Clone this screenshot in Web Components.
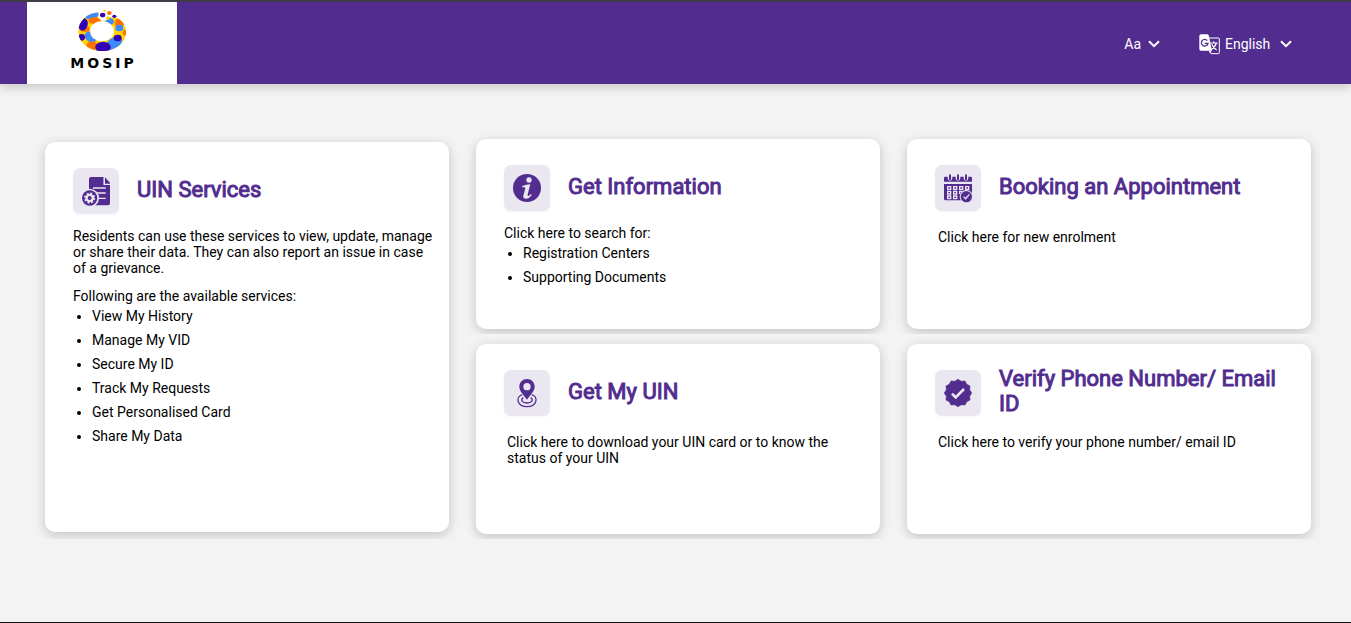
<!DOCTYPE html>
<html lang="en">
<head>
<meta charset="utf-8">
<meta name="viewport" content="width=device-width, initial-scale=1">
<title>MOSIP Resident Portal</title>
<style>
  body {
    margin: 0;
    background: #f3f3f3;
    color: #000;
    font: 14px/16px Roboto, "Liberation Sans", sans-serif;
    --brand: #522d8f;
    --brand-soft: #ebe7f1;
  }
</style>
</head>
<body>
<resident-portal></resident-portal>

<script>
const define = (name, html) => {
  const template = document.createElement('template');
  template.innerHTML = html;
  customElements.define(name, class extends HTMLElement {
    constructor() {
      super();
      this.attachShadow({ mode: 'open' }).append(template.content.cloneNode(true));
    }
  });
};

/* ---------- logo ---------- */
define('mosip-logo', `
<style>
  :host { display: flex; flex-direction: column; align-items: center; width: 150px; height: 82px; padding-top: 6px; box-sizing: border-box; background: #fff; }
  svg { display: block; width: 50px; height: 44px; }
  span { color: #000; font: 700 14px/22px "DejaVu Sans", sans-serif; letter-spacing: 3px; padding-left: 3px; }
</style>
<svg viewBox="171 24 150 132" aria-hidden="true">
  <defs><clipPath id="ring"><path clip-rule="evenodd" d="M235 37C200 40 175 64 175 95C175 128 208 153 247 153C287 153 318 128 318 95C318 76 307 60 289 53L268 52L258 62H246L235 55ZM246 63C266 63 282 76 282 94C282 111 266 124 246 124C226 124 210 111 210 94C210 76 226 63 246 63Z"/></clipPath></defs>
  <g clip-path="url(#ring)">
    <rect x="170" y="25" width="150" height="130" fill="#ffd200"/>
    <ellipse cx="218" cy="44" rx="24" ry="11" transform="rotate(-18 218 44)" fill="#3d8bfd"/>
    <ellipse cx="224" cy="62" rx="19" ry="10" fill="#ff7200"/>
    <ellipse cx="195" cy="87" rx="14" ry="9" fill="#ff7200"/>
    <ellipse cx="189" cy="73" rx="14" ry="19" transform="rotate(15 189 73)" fill="#3300b5"/>
    <ellipse cx="212" cy="111" rx="19" ry="15" transform="rotate(35 212 111)" fill="#3d8bfd"/>
    <ellipse cx="185" cy="112" rx="10" ry="10" fill="#3300b5"/>
    <ellipse cx="216" cy="138" rx="17" ry="14" fill="#ff7200"/>
    <ellipse cx="282" cy="130" rx="27" ry="17" transform="rotate(-35 282 130)" fill="#3d8bfd"/>
    <ellipse cx="249" cy="142" rx="23" ry="17" fill="#3300b5"/>
    <ellipse cx="293" cy="114" rx="12" ry="10" fill="#3300b5"/>
    <ellipse cx="268" cy="63" rx="14" ry="10" transform="rotate(25 268 63)" fill="#3d8bfd"/>
    <ellipse cx="298" cy="69" rx="14" ry="14" fill="#ff7200"/>
    <ellipse cx="298" cy="84" rx="12" ry="10" fill="#3d8bfd"/>
    <ellipse cx="316" cy="98" rx="7" ry="9" fill="#ff7200"/>
  </g>
  <ellipse cx="248" cy="45" rx="8" ry="7" fill="#3300b5"/>
  <ellipse cx="268" cy="39" rx="7" ry="6" fill="#ff7200"/>
  <ellipse cx="283" cy="49" rx="6" ry="5" fill="#3300b5"/>
  <ellipse cx="254" cy="32" rx="4" ry="3" fill="#ffd200"/>
  <ellipse cx="264" cy="54" rx="6" ry="5" fill="#ffd200"/>
</svg>
<span>MOSIP</span>`);

/* ---------- header ---------- */
define('chevron-icon', `
<style>:host { display: block; width: 12px; height: 8px; pointer-events: none; } svg { display: block; }</style>
<svg width="12" height="8" viewBox="0 0 12 8" aria-hidden="true"><path d="M1 1.2L6 6.2L11 1.2" fill="none" stroke="#fff" stroke-width="2"/></svg>`);

define('font-size-menu', `
<style>
  :host { display: block; }
  button { display: flex; align-items: center; gap: 7px; margin: 0; padding: 0; border: 0; background: none; color: #fff; font: inherit; cursor: pointer; }
</style>
<button type="button" aria-haspopup="menu" aria-label="Aa, font size">Aa<chevron-icon></chevron-icon></button>`);

define('language-picker', `
<style>
  :host { display: flex; align-items: center; gap: 5px; }
  svg { display: block; }
  .field { display: grid; align-items: center; width: 67px; }
  select, chevron-icon { grid-area: 1 / 1; }
  chevron-icon { justify-self: end; }
  select { appearance: none; width: 100%; margin: 0; padding: 0 16px 0 0; border: 0; background: none; color: #fff; font: inherit; cursor: pointer; }
  option { color: #000; }
</style>
<label for="lang" aria-label="Language">
  <svg width="21" height="21" viewBox="0 0 63 63" aria-hidden="true">
    <path d="M29 12H58Q61 12 61 15V56Q61 59 58 59H36L31 51" fill="none" stroke="#fff" stroke-width="3"/>
    <path d="M6 1H24Q28 1 29 4L39 50H6Q1 50 1 45V6Q1 1 6 1Z" fill="#fff"/>
    <path d="M25 20A10 10 0 1 0 27 28H17" fill="none" stroke="#522d8f" stroke-width="4"/>
    <path d="M33 27H56M44 22V27M52 27Q49 38 36 47M38 31Q43 41 53 48" fill="none" stroke="#fff" stroke-width="3.5"/>
    <path d="M30 50H38L33 57Z" fill="#fff"/>
  </svg>
</label>
<div class="field">
  <select id="lang"><option>English</option><option>Français</option><option>العربية</option></select>
  <chevron-icon></chevron-icon>
</div>`);

define('portal-header', `
<style>
  :host { display: block; position: relative; border-top: 2px solid #403c46; background: var(--brand); box-shadow: 0 2px 10px rgba(0,0,0,.22); }
  header { display: flex; align-items: center; justify-content: space-between; padding: 0 59px 0 27px; }
  nav { display: flex; align-items: center; gap: 39px; padding-top: 2px; }
</style>
<header>
  <mosip-logo></mosip-logo>
  <nav aria-label="Preferences"><font-size-menu></font-size-menu><language-picker></language-picker></nav>
</header>`);

/* ---------- cards ---------- */
define('service-card', `
<style>
  :host { display: grid; clip-path: inset(-20px -20px -5px); }
  article { padding: 26px 16px 20px 28px; border-radius: 10px; background: #fff; box-shadow: 0 3px 12px rgba(0,0,0,.2); }
  .head { display: flex; align-items: center; gap: 18px; height: 46px; margin-bottom: 14px; }
  .tile { flex: none; width: 46px; height: 46px; border-radius: 7px; background: var(--brand-soft); box-shadow: 0 1px 3px rgba(82,45,143,.05); }
  h2 { margin: 0; padding-bottom: 4px; color: var(--brand); font-size: 22px; line-height: 25px; font-weight: 400; -webkit-text-stroke: 1px var(--brand); }
  a { color: inherit; text-decoration: none; }
  ::slotted(svg) { display: block; width: 46px; height: 46px; }
</style>
<article>
  <div class="head">
    <div class="tile"><slot name="icon"></slot></div>
    <h2><a href="#"><slot name="title"></slot></a></h2>
  </div>
  <slot></slot>
</article>`);

define('card-note', `
<style>:host { display: block; padding: 4px 3px 0; } p { margin: 0; }</style>
<p><slot></slot></p>`);

define('resident-portal', `
<style>
  :host { display: flex; flex-direction: column; min-height: 100vh; box-sizing: border-box; border-bottom: 1px solid #111; }
  main { display: grid; grid-template-columns: repeat(3, minmax(0, 1fr)); grid-auto-rows: minmax(190px, auto); gap: 15px 27px; padding: 55px 40px 55px 45px; }
  .tall { grid-row: span 2; margin: 3px 0 2px; clip-path: inset(-20px -20px -7px); }
  p { margin: 0; }
  p + p { margin-top: 12px; }
  ul { margin: 0; padding: 0 0 0 19px; line-height: 24px; }
  @media (max-width: 900px) { main { grid-template-columns: minmax(0, 1fr); } .tall { grid-row: auto; } }
</style>
<portal-header></portal-header>
<main>
  <service-card class="tall">
    <svg slot="icon" viewBox="0 0 138 138" aria-hidden="true">
      <path d="M54 27H92V51H111V106Q111 112 105 112H54Q48 112 48 106V33Q48 27 54 27Z" fill="#522d8f"/>
      <path d="M92 24H114V51H92Z" fill="#ebe7f1"/>
      <path d="M96 28L111 44V47H96Z" fill="#522d8f"/>
      <path d="M60 60H98M70 75H98M76 91H98" stroke="#ebe7f1" stroke-width="4"/>
      <circle cx="50" cy="90" r="28" fill="#ebe7f1"/>
      <circle cx="50" cy="90" r="23" fill="#522d8f"/>
      <circle cx="50" cy="90" r="13" fill="#ebe7f1"/>
      <circle cx="50" cy="90" r="14" fill="none" stroke="#ebe7f1" stroke-width="5" stroke-dasharray="6 5"/>
      <circle cx="50" cy="90" r="6" fill="#522d8f"/>
    </svg>
    <span slot="title">UIN Services</span>
    <p>Residents can use these services to view, update, manage or share their data. They can also report an issue in case of a grievance.</p>
    <p>Following are the available services:</p>
    <ul>
      <li>View My History</li>
      <li>Manage My VID</li>
      <li>Secure My ID</li>
      <li>Track My Requests</li>
      <li>Get Personalised Card</li>
      <li>Share My Data</li>
    </ul>
  </service-card>

  <service-card>
    <svg slot="icon" viewBox="0 0 138 138" aria-hidden="true">
      <circle cx="69" cy="69" r="42" fill="#522d8f"/>
      <circle cx="75" cy="45" r="8" fill="#ebe7f1"/>
      <path d="M55 63Q66 59 79 58L71 88Q70 94 73 93Q77 92 81 87L83 90Q76 101 66 101Q56 101 58 92L64 70Q65 65 55 67Z" fill="#ebe7f1"/>
    </svg>
    <span slot="title">Get Information</span>
    <p>Click here to search for:</p>
    <ul>
      <li>Registration Centers</li>
      <li>Supporting Documents</li>
    </ul>
  </service-card>

  <service-card>
    <svg slot="icon" viewBox="0 0 138 138" aria-hidden="true">
      <path d="M27 50V39Q27 35 31 35H107Q111 35 111 39V50Z" fill="#522d8f"/>
      <path d="M45 31V40M69 31V40M93 31V40" stroke="#ebe7f1" stroke-width="14" stroke-linecap="round"/>
      <path d="M45 31V43M69 31V43M93 31V43" stroke="#522d8f" stroke-width="6" stroke-linecap="round"/>
      <path d="M27 57H111V106H32Q27 106 27 101Z" fill="#522d8f"/>
      <g fill="none" stroke="#ebe7f1" stroke-width="4">
        <path d="M38 65H47V73H38ZM56 65H65V73H56ZM74 65H83V73H74ZM92 65H101V73H92Z"/>
        <path d="M38 79H47V87H38ZM56 79H65V87H56ZM74 87V79H83"/>
        <path d="M38 93H47V101H38ZM56 93H65V101H56Z"/>
      </g>
      <circle cx="94" cy="95" r="20" fill="#ebe7f1"/>
      <circle cx="94" cy="95" r="17" fill="#522d8f"/>
      <path d="M86 95L92 101L103 88" fill="none" stroke="#ebe7f1" stroke-width="4"/>
    </svg>
    <span slot="title">Booking an Appointment</span>
    <card-note>Click here for new enrolment</card-note>
  </service-card>

  <service-card>
    <svg slot="icon" viewBox="0 0 138 138" aria-hidden="true">
      <g fill="none" stroke="#522d8f" stroke-width="4">
        <path d="M55 74C34 80 38 110 69 110C100 110 104 80 83 74"/>
        <path d="M58 83C48 90 55 99 69 99C83 99 90 90 80 83"/>
      </g>
      <path fill-rule="evenodd" d="M69 27C56 27 46 37 46 50C46 64 60 75 69 89C78 75 92 64 92 50C92 37 82 27 69 27ZM69 39A11 11 0 1 1 69 61A11 11 0 1 1 69 39Z" fill="#522d8f"/>
    </svg>
    <span slot="title">Get My UIN</span>
    <card-note>Click here to download your UIN card or to know the status of your UIN</card-note>
  </service-card>

  <service-card>
    <svg slot="icon" viewBox="0 0 138 138" aria-hidden="true">
      <path d="M69 28L79 34L90 33L95 43L105 48L104 59L110 69L104 79L105 90L95 95L90 105L79 104L69 110L59 104L48 105L43 95L33 90L34 79L28 69L34 59L33 48L43 43L48 33L59 34Z" fill="#522d8f" stroke="#522d8f" stroke-width="2" stroke-linejoin="round"/>
      <path d="M51 71L62 82L87 57" fill="none" stroke="#ebe7f1" stroke-width="8"/>
    </svg>
    <span slot="title">Verify Phone Number/ Email ID</span>
    <card-note>Click here to verify your phone number/ email ID</card-note>
  </service-card>
</main>`);
</script>
</body>
</html>
